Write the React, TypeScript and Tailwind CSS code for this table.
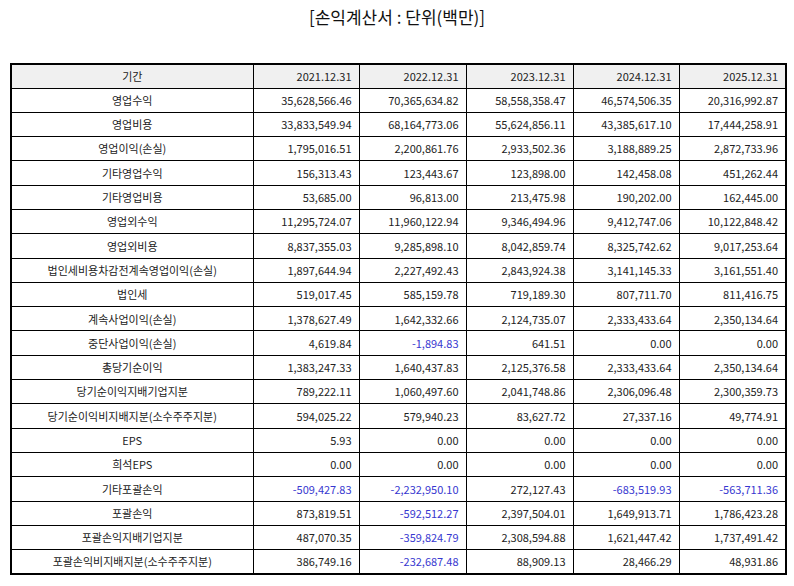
const years = ['2021.12.31', '2022.12.31', '2023.12.31', '2024.12.31', '2025.12.31']

const rows: [string, string[]][] = [
  ['영업수익', ['35,628,566.46', '70,365,634.82', '58,558,358.47', '46,574,506.35', '20,316,992.87']],
  ['영업비용', ['33,833,549.94', '68,164,773.06', '55,624,856.11', '43,385,617.10', '17,444,258.91']],
  ['영업이익(손실)', ['1,795,016.51', '2,200,861.76', '2,933,502.36', '3,188,889.25', '2,872,733.96']],
  ['기타영업수익', ['156,313.43', '123,443.67', '123,898.00', '142,458.08', '451,262.44']],
  ['기타영업비용', ['53,685.00', '96,813.00', '213,475.98', '190,202.00', '162,445.00']],
  ['영업외수익', ['11,295,724.07', '11,960,122.94', '9,346,494.96', '9,412,747.06', '10,122,848.42']],
  ['영업외비용', ['8,837,355.03', '9,285,898.10', '8,042,859.74', '8,325,742.62', '9,017,253.64']],
  ['법인세비용차감전계속영업이익(손실)', ['1,897,644.94', '2,227,492.43', '2,843,924.38', '3,141,145.33', '3,161,551.40']],
  ['법인세', ['519,017.45', '585,159.78', '719,189.30', '807,711.70', '811,416.75']],
  ['계속사업이익(손실)', ['1,378,627.49', '1,642,332.66', '2,124,735.07', '2,333,433.64', '2,350,134.64']],
  ['중단사업이익(손실)', ['4,619.84', '-1,894.83', '641.51', '0.00', '0.00']],
  ['총당기순이익', ['1,383,247.33', '1,640,437.83', '2,125,376.58', '2,333,433.64', '2,350,134.64']],
  ['당기순이익지배기업지분', ['789,222.11', '1,060,497.60', '2,041,748.86', '2,306,096.48', '2,300,359.73']],
  ['당기순이익비지배지분(소수주주지분)', ['594,025.22', '579,940.23', '83,627.72', '27,337.16', '49,774.91']],
  ['EPS', ['5.93', '0.00', '0.00', '0.00', '0.00']],
  ['희석EPS', ['0.00', '0.00', '0.00', '0.00', '0.00']],
  ['기타포괄손익', ['-509,427.83', '-2,232,950.10', '272,127.43', '-683,519.93', '-563,711.36']],
  ['포괄손익', ['873,819.51', '-592,512.27', '2,397,504.01', '1,649,913.71', '1,786,423.28']],
  ['포괄손익지배기업지분', ['487,070.35', '-359,824.79', '2,308,594.88', '1,621,447.42', '1,737,491.42']],
  ['포괄손익비지배지분(소수주주지분)', ['386,749.16', '-232,687.48', '88,909.13', '28,466.29', '48,931.86']],
]

export default function App() {
  return (
    <div className="w-[794px] h-[586px] bg-white text-[#222] font-['Noto_Sans_CJK_KR','Noto_Sans',sans-serif]">
      <h1 className="pt-[5px] text-center text-[17px] leading-[24px] text-[#111]">[손익계산서 : 단위(백만)]</h1>

      <table className="mt-[34px] ml-[10px] w-[775px] table-fixed border-collapse border-2 border-black text-[11px]">
        <colgroup>
          <col className="w-[242px]" />
          <col className="w-[106px]" />
          <col className="w-[107px]" />
          <col className="w-[107px]" />
          <col className="w-[106px]" />
          <col className="w-[107px]" />
        </colgroup>
        <thead>
          <tr className="h-[24px] bg-[#f0f0f0]">
            <td className="border-[1.5px] border-black text-center font-normal">기간</td>
            {years.map((y) => (
              <td key={y} className="border-[1.5px] border-black text-right pr-[7px]">
                {y}
              </td>
            ))}
          </tr>
        </thead>
        <tbody>
          {rows.map(([label, vals]) => (
            <tr key={label} className="h-[24.3px]">
              <td className="border-[1.5px] border-black text-center">{label}</td>
              {vals.map((v, i) => (
                <td
                  key={i}
                  className={`border-[1.5px] border-black text-right pr-[7px] ${v.startsWith('-') ? 'text-[#3737d0]' : ''}`}
                >
                  {v}
                </td>
              ))}
            </tr>
          ))}
        </tbody>
      </table>
    </div>
  )
}
